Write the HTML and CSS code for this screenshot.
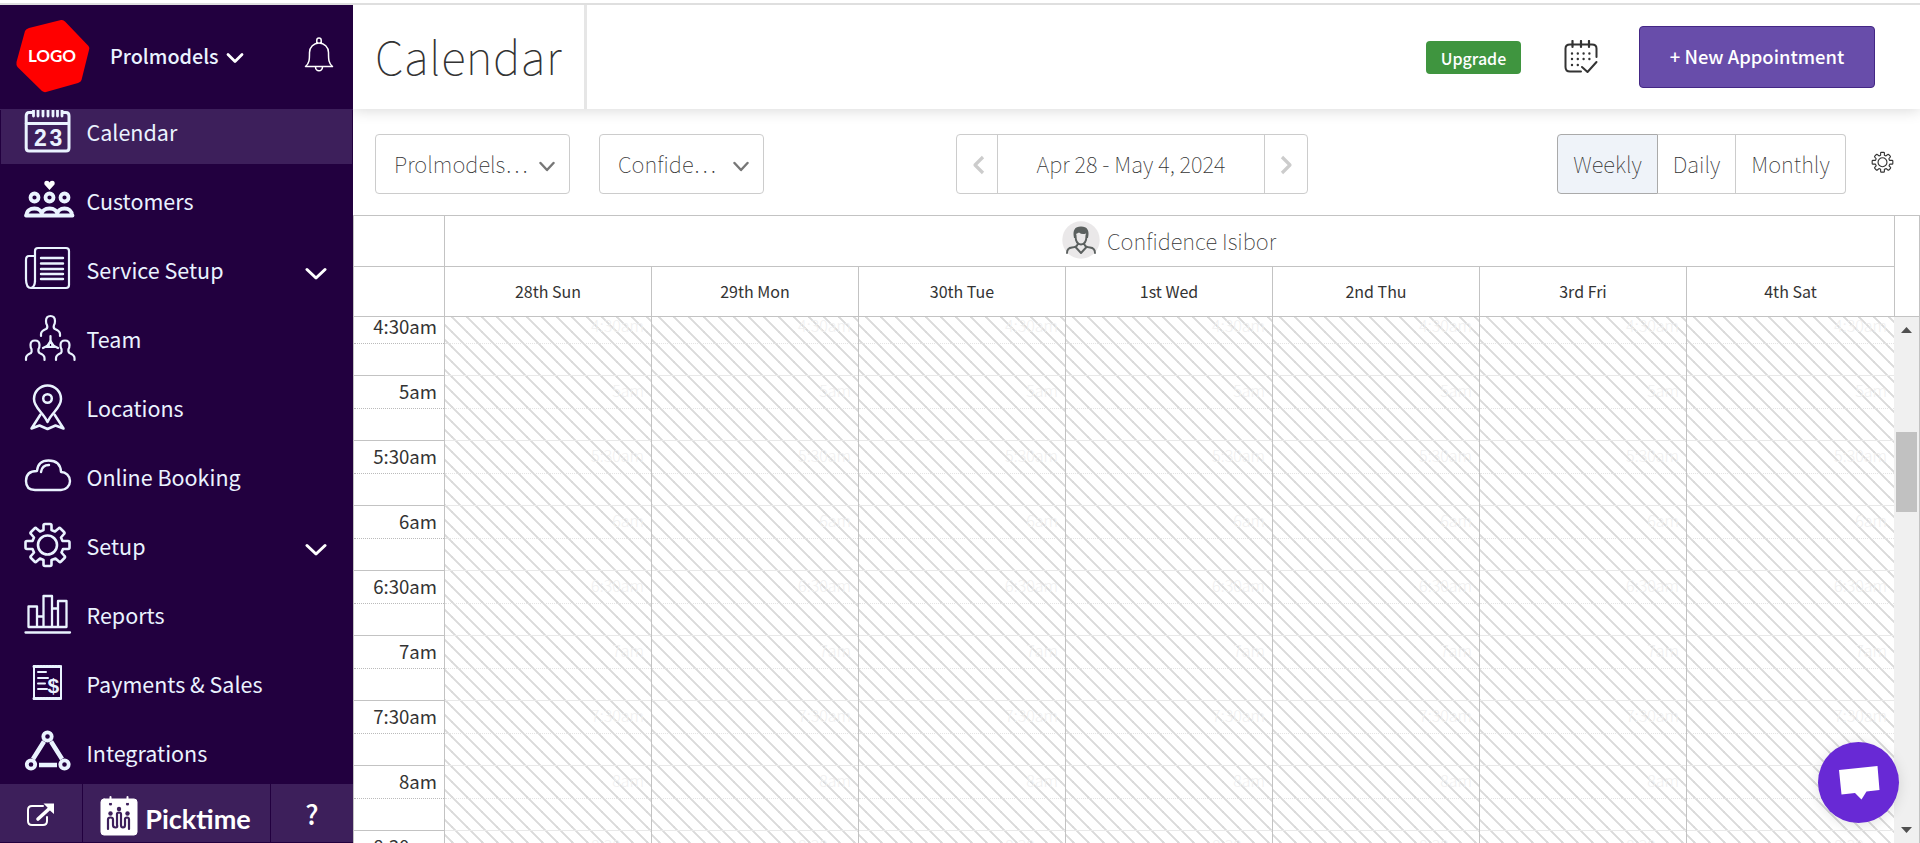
FILE: index.html
```html
<!DOCTYPE html>
<html lang="en">
<head>
<meta charset="utf-8">
<title>Calendar</title>
<link rel="stylesheet" href="styles.css">
</head>
<body>
<div class="app">
  <aside class="sidebar">
    <div class="account">
      <svg class="logo" width="74" height="74" viewBox="0 0 74 74"><path d="M13 9 45 1Q47.500 .500 49 2.500L72.500 27Q74 29 73 31L65.500 61Q65 63 62 64L30 73Q28 73.500 26 72L1.500 48Q0 46 .500 43L9 12Q10 10 13 9Z" fill="#f00"/><text x="36" y="43" text-anchor="middle">LOGO</text></svg>
      <span class="account-name">Prolmodels</span>
      <svg class="account-caret" width="18" height="12" viewBox="0 0 18 12"><path d="M2 2.500 9 9.500 16 2.500"/></svg>
      <svg class="bell" width="30" height="35" viewBox="0 0 30 35"><path d="M12.800 6.500V3.200a2.200 2.200 0 0 1 4.400 0V6.500M1.500 29.500c4-3.500 4-7 4-14a9.500 9.500 0 0 1 19 0c0 7 0 10.500 4 14ZM11.500 30a3.500 3.800 0 0 0 7 0"/></svg>
    </div>
    <nav class="menu">
      <a class="item active"><svg class="icon" viewBox="0 0 52 52"><path d="M9 7.500H6Q3.200 7.500 3.200 11V43q0 3 3 3H43q3 0 3-3V11q0-3.500-3-3.500H40M3 18.500H46" stroke-width="3"/><path d="M10.500 2v9M15 2v9M20 2v9M25 2v9M30 2v9M34.500 2v9M39 2v9" stroke-width="2.800"/><text x="11" y="40.500" class="day">2</text><text x="26.500" y="40.500" class="day">3</text></svg><span>Calendar</span></a>
      <a class="item"><svg class="icon" viewBox="0 0 52 52"><g stroke-width="3.800"><circle cx="11.500" cy="23.500" r="4"/><circle cx="26.500" cy="23.500" r="4"/><circle cx="41.500" cy="23.500" r="4"/><path d="M3.500 41.500C3.500 37 7 34.500 11.500 34.500S19 37 19 41.500M18.500 41.500c0-4.500 3.500-7 8-7s8 2.500 8 7M34 41.500c0-4.500 3.500-7 7.500-7S49 37 49 41.500M3 41.500H49.500"/></g><path class="solid" d="M26.500 16 21.500 10.500Q20.500 7 24 6.800 26 7 26.500 8.500 27 7 29 6.800 32.500 7 31.500 10.500Z"/></svg><span>Customers</span></a>
      <a class="item"><svg class="icon" viewBox="0 0 52 52"><path d="M12 39V8q0-3 3-3H43q3 0 3 3V42q0 3-3 3H8q-5 0-5-9V17q0-4 3-4H11M12 37q0 7-4 8" stroke-width="2.200"/><path d="M18 15H40M18 20.500H40M18 26H40M18 31H40M18 36H40" stroke-width="2.400"/></svg><span>Service Setup</span><svg class="caret" viewBox="0 0 22 14"><path d="M2 2.500 11 11 20 2.500"/></svg></a>
      <a class="item"><svg class="icon wide" viewBox="0 0 54 52"><g stroke-width="2.200"><path d="M18 24v-2q0-3 5-5 2-1 1-4-1-1-1-4 0-5 4.500-5T32 9q0 3-1 4-1 3 1 4 5 2 5 5v2"/><path d="M3 48v-2q0-3 5-5 1-1 .500-4-1-1-1-4 0-4.500 4.500-4.500T16.500 33q0 3-1 4-.500 3 1 4 5 2 5 5v2M33 48v-2q0-3 5-5 1-1 .500-4-1-1-1-4 0-4.500 4.500-4.500T46.500 33q0 3-1 4-.500 3 1 4 5 2 5 5v2M27.500 24v7M20 36l6-3M35 36l-6-3"/><path d="m27.500 29-4 6h8Z"/></g></svg><span>Team</span></a>
      <a class="item"><svg class="icon" viewBox="0 0 52 52"><g stroke-width="2.500"><path d="M24.500 41C20 31 11 27 11 18a13.500 13.500 0 0 1 27 0c0 9-9 13-13.500 23Z"/><circle cx="24.500" cy="17.500" r="4.300"/><path d="M17.500 33.500 8.500 47.500l8-3 8 3.500 8-3.500 8 3-9-14"/></g></svg><span>Locations</span></a>
      <a class="item"><svg class="icon" viewBox="0 0 52 52"><g stroke-width="2.400"><path d="M12 40H38a9 9 0 0 0 0-18Q37.500 10.500 25.500 10.500 15 10.500 14 21 3 21 3 31 3 40 12 40Z"/><path d="M18 22q1-7 8-7"/></g></svg><span>Online Booking</span></a>
      <a class="item"><svg class="icon" viewBox="0 -2 52 52"><use href="#gear" stroke-width="2.600"/></svg><span>Setup</span><svg class="caret" viewBox="0 0 22 14"><path d="M2 2.500 11 11 20 2.500"/></svg></a>
      <a class="item"><svg class="icon" viewBox="0 0 52 52"><path d="M2.500 44.500H47M5.500 39V18.500h8.500V39M5.500 39H43.500V13h-8.500V39M20.500 39V8h8.500V39M14 28.500h6.500M29 20.500h6" stroke-width="2.300"/></svg><span>Reports</span></a>
      <a class="item"><svg class="icon" viewBox="0 -1 52 52"><path d="M11 8V41M38 8V41" stroke-width="2"/><path d="M11 8.500H38M11 40.500H38" stroke-width="3" stroke-dasharray="1.800 1.200"/><path d="M15 14h8M15 20h10M15 25.500h7M15 31h9" stroke-width="2"/><text x="24.500" y="35" class="dollar">$</text></svg><span>Payments &amp; Sales</span></a>
      <a class="item"><svg class="icon" viewBox="0 0 52 52"><circle cx="24.500" cy="10.500" r="4.200" stroke-width="3.800"/><circle cx="8" cy="38.500" r="4.200" stroke-width="3.800"/><circle cx="41.500" cy="38.500" r="4.200" stroke-width="3.800"/><path d="M10 33 21 15.500M28 15.500 39 33M16 39H34" stroke-width="4.600" stroke-linecap="butt"/></svg><span>Integrations</span></a>
    </nav>
    <div class="foot">
      <div class="foot-cell side"><svg width="30" height="26" viewBox="0 0 30 26"><path d="M17 4H6Q2 4 2 8V19q0 4 4 4H17q4 0 4-4V15" stroke-width="2"/><path d="M12 17 24 6" stroke-width="3.600"/><path class="solid" d="M17.500 1.500H28V12L24.500 9 21 5Z"/></svg></div>
      <div class="foot-cell brand"><svg width="38" height="40" viewBox="0 0 38 40"><rect x="1" y="3" width="36" height="36" rx="3" fill="#fff"/><g stroke="#3d1f5b" stroke-width="2.200"><path d="M8 33V23.500q0-2 2.500-2T13 23.500V29q0 2.500 2.500 2.500T17 29V18q0-1.500 2-1.500t2 1.500V29q0 2.500 2 2.500T25 29V23q0-1.500 2-1.500t2 2V33"/></g><g fill="#3d1f5b" stroke="none"><circle cx="10.500" cy="17.500" r="2.200"/><circle cx="19" cy="13" r="2.200"/><circle cx="27.500" cy="17.500" r="2.200"/><circle cx="10.500" cy="8" r="1.600"/><circle cx="27.500" cy="8" r="1.600"/></g><path d="M10.500 1v5M27.500 1v5" stroke-width="2"/></svg><span>Picktime</span></div>
      <div class="foot-cell help">?</div>
    </div>
  </aside>

  <main class="main">
    <header class="topbar">
      <h1>Calendar</h1>
      <div class="actions">
        <span class="upgrade">Upgrade</span>
        <svg class="cal-check" width="34" height="34" viewBox="0 0 34 34"><path d="M17 31.500H6Q1.500 31.500 1.500 27V8.500q0-4 4.500-4H28q4.500 0 4.500 4V17M18 27l5.500 5L32.500 22" stroke-width="2"/><path d="M8.500 1v6M17 1v6M25 1v6" stroke-width="2.200"/><path d="M8 13.500H27M8 19H27M8 25H16" stroke-width="2.400" stroke-dasharray="0 5.800"/></svg>
        <button class="new">+ New Appointment</button>
      </div>
    </header>

    <div class="toolbar">
      <div class="select first"><span>Prolmodels…</span><svg width="16" height="11" viewBox="0 0 16 11"><path d="M1.500 2 8 9 14.500 2"/></svg></div>
      <div class="select second"><span>Confide…</span><svg width="16" height="11" viewBox="0 0 16 11"><path d="M1.500 2 8 9 14.500 2"/></svg></div>
      <div class="range">
        <div class="step"><svg width="13" height="20" viewBox="0 0 13 20"><path d="M11 2 3 10 11 18"/></svg></div>
        <div class="dates">Apr 28 - May 4, 2024</div>
        <div class="step next"><svg width="13" height="20" viewBox="0 0 13 20"><path d="M2 2 10 10 2 18"/></svg></div>
      </div>
      <div class="views"><div class="view weekly">Weekly</div><div class="view daily">Daily</div><div class="view monthly">Monthly</div></div>
      <svg class="settings" width="23" height="23" viewBox="0 0 49 49"><path id="gear" d="M20.500 9V4.500q0-1.500 1.500-1.500h5q1.500 0 1.500 1.500V9l3.500 1.500 3.500-3q1-1 2 0l3.500 3.500q1 1 0 2l-3 3.500L39.500 20H45q1.500 0 1.500 1.500v5q0 1.500-1.500 1.500H40l-1.500 3.500 3 3.500q1 1 0 2L38 40.500q-1 1-2 0l-3.500-3L28.500 39v4.500q0 1.500-1.500 1.500H22q-1.500 0-1.500-1.500V39l-3.500-1.500-3.500 3q-1 1-2 0L8 37q-1-1 0-2l3-3.500L9.500 28H4q-1.500 0-1.500-1.500v-5Q2.500 20 4 20H9.500L11 16.500 8 13q-1-1 0-2l3.500-3.500q1-1 2 0l3.500 3ZM34 24a9.500 9.500 0 1 0-19 0 9.500 9.500 0 1 0 19 0Z"/></svg>
    </div>

    <section class="calendar">
      <div class="cal-head">
        <div class="corner"><div></div><div></div></div>
        <div class="head-main">
          <div class="person"><svg width="38" height="38" viewBox="0 0 38 38"><circle cx="19" cy="19" r="18.700" fill="#eae8e9"/><g stroke="#5b605f" stroke-width="1.900" fill="none"><path d="M13.500 14c0 6 2 9.500 5.500 9.500s5.500-3.500 5.500-9.500M5 32q0-5 5-5.500 5-.500 5.500-3M33 32q0-5-5-5.500-5-.500-5.500-3M13.500 26 19 32 24.500 26"/></g><path d="M12 17Q9.500 5.500 19 5.500T26 17H24.800L24 12.500Q20 14 17 11.500L14 13 13.200 17Z" fill="#5b605f"/></svg><span>Confidence Isibor</span></div>
          <div class="days"><div>28th Sun</div><div>29th Mon</div><div>30th Tue</div><div>1st Wed</div><div>2nd Thu</div><div>3rd Fri</div><div>4th Sat</div></div>
        </div>
        <div class="gutter"></div>
      </div>
      <div class="cal-body">
        <div class="times" id="times"></div>
        <div class="columns" id="columns"></div>
        <div class="scrollbar"><i class="up"></i><i class="thumb"></i><i class="down"></i></div>
      </div>
    </section>
  </main>
  <div class="chat"><svg width="42" height="36" viewBox="0 0 42 36"><path d="M1 5 39.500 1 41.500 25 28.500 26.500 23.500 34.500 17 28 3.500 29.500Z" fill="#fff"/></svg></div>
</div>
<script src="calendar.js"></script>
</body>
</html>
```
FILE: styles.css
```css
* { box-sizing: border-box; }
body { margin: 0; font-family: "Noto Sans CJK SC", "Open Sans", sans-serif; color: #333; background: #fff; overflow: hidden; }
svg { fill: none; stroke-linecap: round; stroke-linejoin: round; flex: none; }
.app { display: flex; height: 843px; padding-top: 5px; background: linear-gradient(#fff 3px, #dfdfdf 3px, #dfdfdf 5px, #fff 5px); overflow: hidden; }
.sidebar { width: 353px; flex: none; display: flex; flex-direction: column; background: #22003f; color: #eaf3ff; }
.account { height: 104px; flex: none; display: flex; align-items: center; padding: 0 19px 2px 16px; }
.logo text { fill: #fff; font: 700 17px Lato, sans-serif; }
.account-name { margin-left: 20px; font-size: 19.800px; font-weight: 500; line-height: 30px; width: 108px; white-space: nowrap; }
.account-caret { margin-left: 8px; margin-top: 4px; stroke: #fff; stroke-width: 2.800; }
.bell { margin-left: auto; margin-top: -3px; stroke: #fff; stroke-width: 1.500; }
.menu { flex: 1; min-height: 0; display: flex; flex-direction: column; overflow: hidden; border-top: 1px solid #3d1f5b; }
.item { height: 69px; flex: none; display: flex; align-items: center; padding: 3px 25px 0 22px; margin: 0 1px; font-size: 21.500px; font-weight: 400; line-height: 32px; }
.item:first-child { margin-top: -15px; }
.item.active { background: #3d1f5b; }
.icon { width: 52px; height: 52px; stroke: #eaf3ff; }
.icon.wide { width: 54px; margin-right: -2px; }
.item span { margin-left: 11.500px; padding-top: 2px; }
.day { fill: #eaf3ff; stroke: none; font: 700 23px "Liberation Sans", sans-serif; }
.dollar { fill: #eaf3ff; stroke: none; font: 700 21px "Liberation Sans", sans-serif; }
.solid { fill: #fff; stroke: none; }
.caret { width: 22px; height: 14px; margin-left: auto; margin-top: 9px; stroke: #fff; stroke-width: 3; }
.foot { height: 59px; flex: none; display: flex; gap: 1px; padding-bottom: 1px; }
.foot-cell { display: flex; align-items: center; justify-content: center; background: #3d1f5b; stroke: #fff; color: #fff; }
.side { width: 82px; padding-top: 3px; }
.brand { width: 187px; gap: 7px; padding: 5px 2px 0 0; font: 700 27px/30px Lato, sans-serif; }
.brand span { padding-top: 6px; }
.help { flex: 1; font-size: 27px; font-weight: 500; stroke: none; }
.main { flex: 1; min-width: 0; display: flex; flex-direction: column; }
.topbar { height: 104px; flex: none; display: flex; justify-content: space-between; box-shadow: 0 1px 14px rgba(0,0,0,.16); clip-path: inset(0 0 -16px 0); }
.topbar h1 { width: 234px; margin: 0; padding-left: 22px; border-right: 3px solid #e6e6e6; font-size: 46px; font-weight: 100; line-height: 101px; letter-spacing: .450px; }
.actions { display: flex; align-items: center; padding-right: 45px; }
.upgrade { width: 95px; height: 33px; border-radius: 4px; background: #3f953f; color: #fff; text-align: center; font-size: 16px; font-weight: 500; line-height: 34px; }
.cal-check { margin: 0 41px 0 43px; stroke: #333; }
.new { width: 236px; height: 62px; border: 1px solid #442785; border-radius: 4px; background: #684daa; color: #fff; font: 500 18.400px "Noto Sans CJK SC", sans-serif; padding: 0 0 2px; }
.toolbar { height: 106px; flex: none; display: flex; align-items: center; padding: 4px 0 0 22px; font-size: 22px; font-weight: 100; }
.select { height: 60px; border: 1px solid #ccc; border-radius: 4px; display: flex; align-items: center; justify-content: space-between; padding: 0 14px 0 18px; }
.select span, .dates, .view { line-height: 56px; white-space: nowrap; }
.select span { margin-top: -2px; }
.select svg { stroke: #777; stroke-width: 2.400; margin-top: 5px; }
.first { width: 195px; }
.second { width: 165px; margin-left: 29px; }
.range { display: flex; width: 352px; height: 60px; margin-left: 192px; border: 1px solid #ccc; border-radius: 4px; }
.step { width: 40px; display: flex; align-items: center; justify-content: center; padding: 2px 0 0 2px; }
.step.next { width: 42px; padding-left: 0; }
.step svg { stroke: #ccc; stroke-width: 3.200; stroke-linecap: butt; }
.dates { flex: 1; text-align: center; border: 1px solid #ccc; border-width: 0 1px; }
.views { display: flex; height: 60px; margin-left: 249px; }
.view { border: 1px solid #ccc; text-align: center; }
.weekly { width: 101px; border-color: #aaa; border-radius: 4px 0 0 4px; background: #eff3f9; }
.daily { width: 78px; border-left: 0; }
.monthly { width: 110px; border-left: 0; border-radius: 0 4px 4px 0; }
.settings { margin: 0 0 4px 25px; stroke: #333; stroke-width: 2.400; }
.calendar { flex: 1; min-height: 0; display: flex; flex-direction: column; border: solid #c3c3c3; border-width: 1px 1px 0; }
.cal-head { height: 101px; flex: none; display: flex; border-bottom: 1px solid #c3c3c3; }
.corner { width: 91px; border-right: 1px solid #c3c3c3; }
.corner div:first-child, .person { height: 51px; border-bottom: 1px solid #c3c3c3; }
.head-main { width: 1450px; border-right: 1px solid #c3c3c3; }
.person { display: flex; align-items: center; justify-content: center; gap: 7px; padding: 0 1px 2px 0; font-size: 22px; font-weight: 100; line-height: 46px; }
.days { display: grid; grid-template-columns: repeat(7, 207px); font-size: 16px; line-height: 48px; text-align: center; }
.days div { height: 49px; border-right: 1px solid #c3c3c3; }
.days div:last-child { border: 0; }
.cal-body { flex: 1; min-height: 0; display: flex; overflow: hidden; }
.times { width: 91px; flex: none; border-right: 1px solid #c3c3c3; }
.slot { height: 65px; border-bottom: 1px solid #c3c3c3; text-align: right; padding-right: 7px; }
.slot:first-child { margin-top: -6px; }
.slot div { height: 33px; margin-right: -7px; padding-right: 7px; border-bottom: 1px dotted #bbb; font-size: 18.600px; line-height: 29px; }
.columns { width: 1449px; flex: none; display: grid; grid-template-columns: repeat(7, 207px); }
.col { overflow: hidden; border-right: 1px solid #c3c3c3; background: linear-gradient(45deg, #dadada .700px, transparent 1.300px calc(50% - 1.200px), #dadada calc(50% - .600px) calc(50% + .600px), transparent calc(50% + 1.200px) calc(100% - 1.300px), #dadada calc(100% - .700px)) 7px 0 / 15px 15px; }
.col:last-child { border: 0; }
.col .slot { border-color: #e9e9e9; }
.col .slot div { border-color: #e4e4e4; color: #f0f0f0; font-size: 16px; font-weight: 300; line-height: 29px; }
.scrollbar { flex: 1; display: flex; flex-direction: column; align-items: center; background: #f0f0f0; }
.up, .down { width: 11px; height: 6px; background: #505050; }
.up { margin-top: 10px; clip-path: polygon(50% 0, 100% 100%, 0 100%); }
.down { margin: auto 0 10px; clip-path: polygon(0 0, 100% 0, 50% 100%); }
.thumb { width: 21px; height: 80px; margin-top: 99px; background: #c1c1c1; }
.chat { position: absolute; right: 21px; bottom: 20px; width: 81px; height: 81px; border-radius: 50%; background: #6829d5; box-shadow: 0 2px 14px rgba(0,0,0,.12); display: flex; align-items: center; justify-content: center; }
```
FILE: calendar.js
```js
const labels = ["4:30am", "5am", "5:30am", "6am", "6:30am", "7am", "7:30am", "8am", "8:30am"];
const slots = labels.map(t => `<div class="slot"><div>${t}</div></div>`).join("");
document.getElementById("times").innerHTML = slots;
document.getElementById("columns").innerHTML = `<div class="col">${slots}</div>`.repeat(7);
```
